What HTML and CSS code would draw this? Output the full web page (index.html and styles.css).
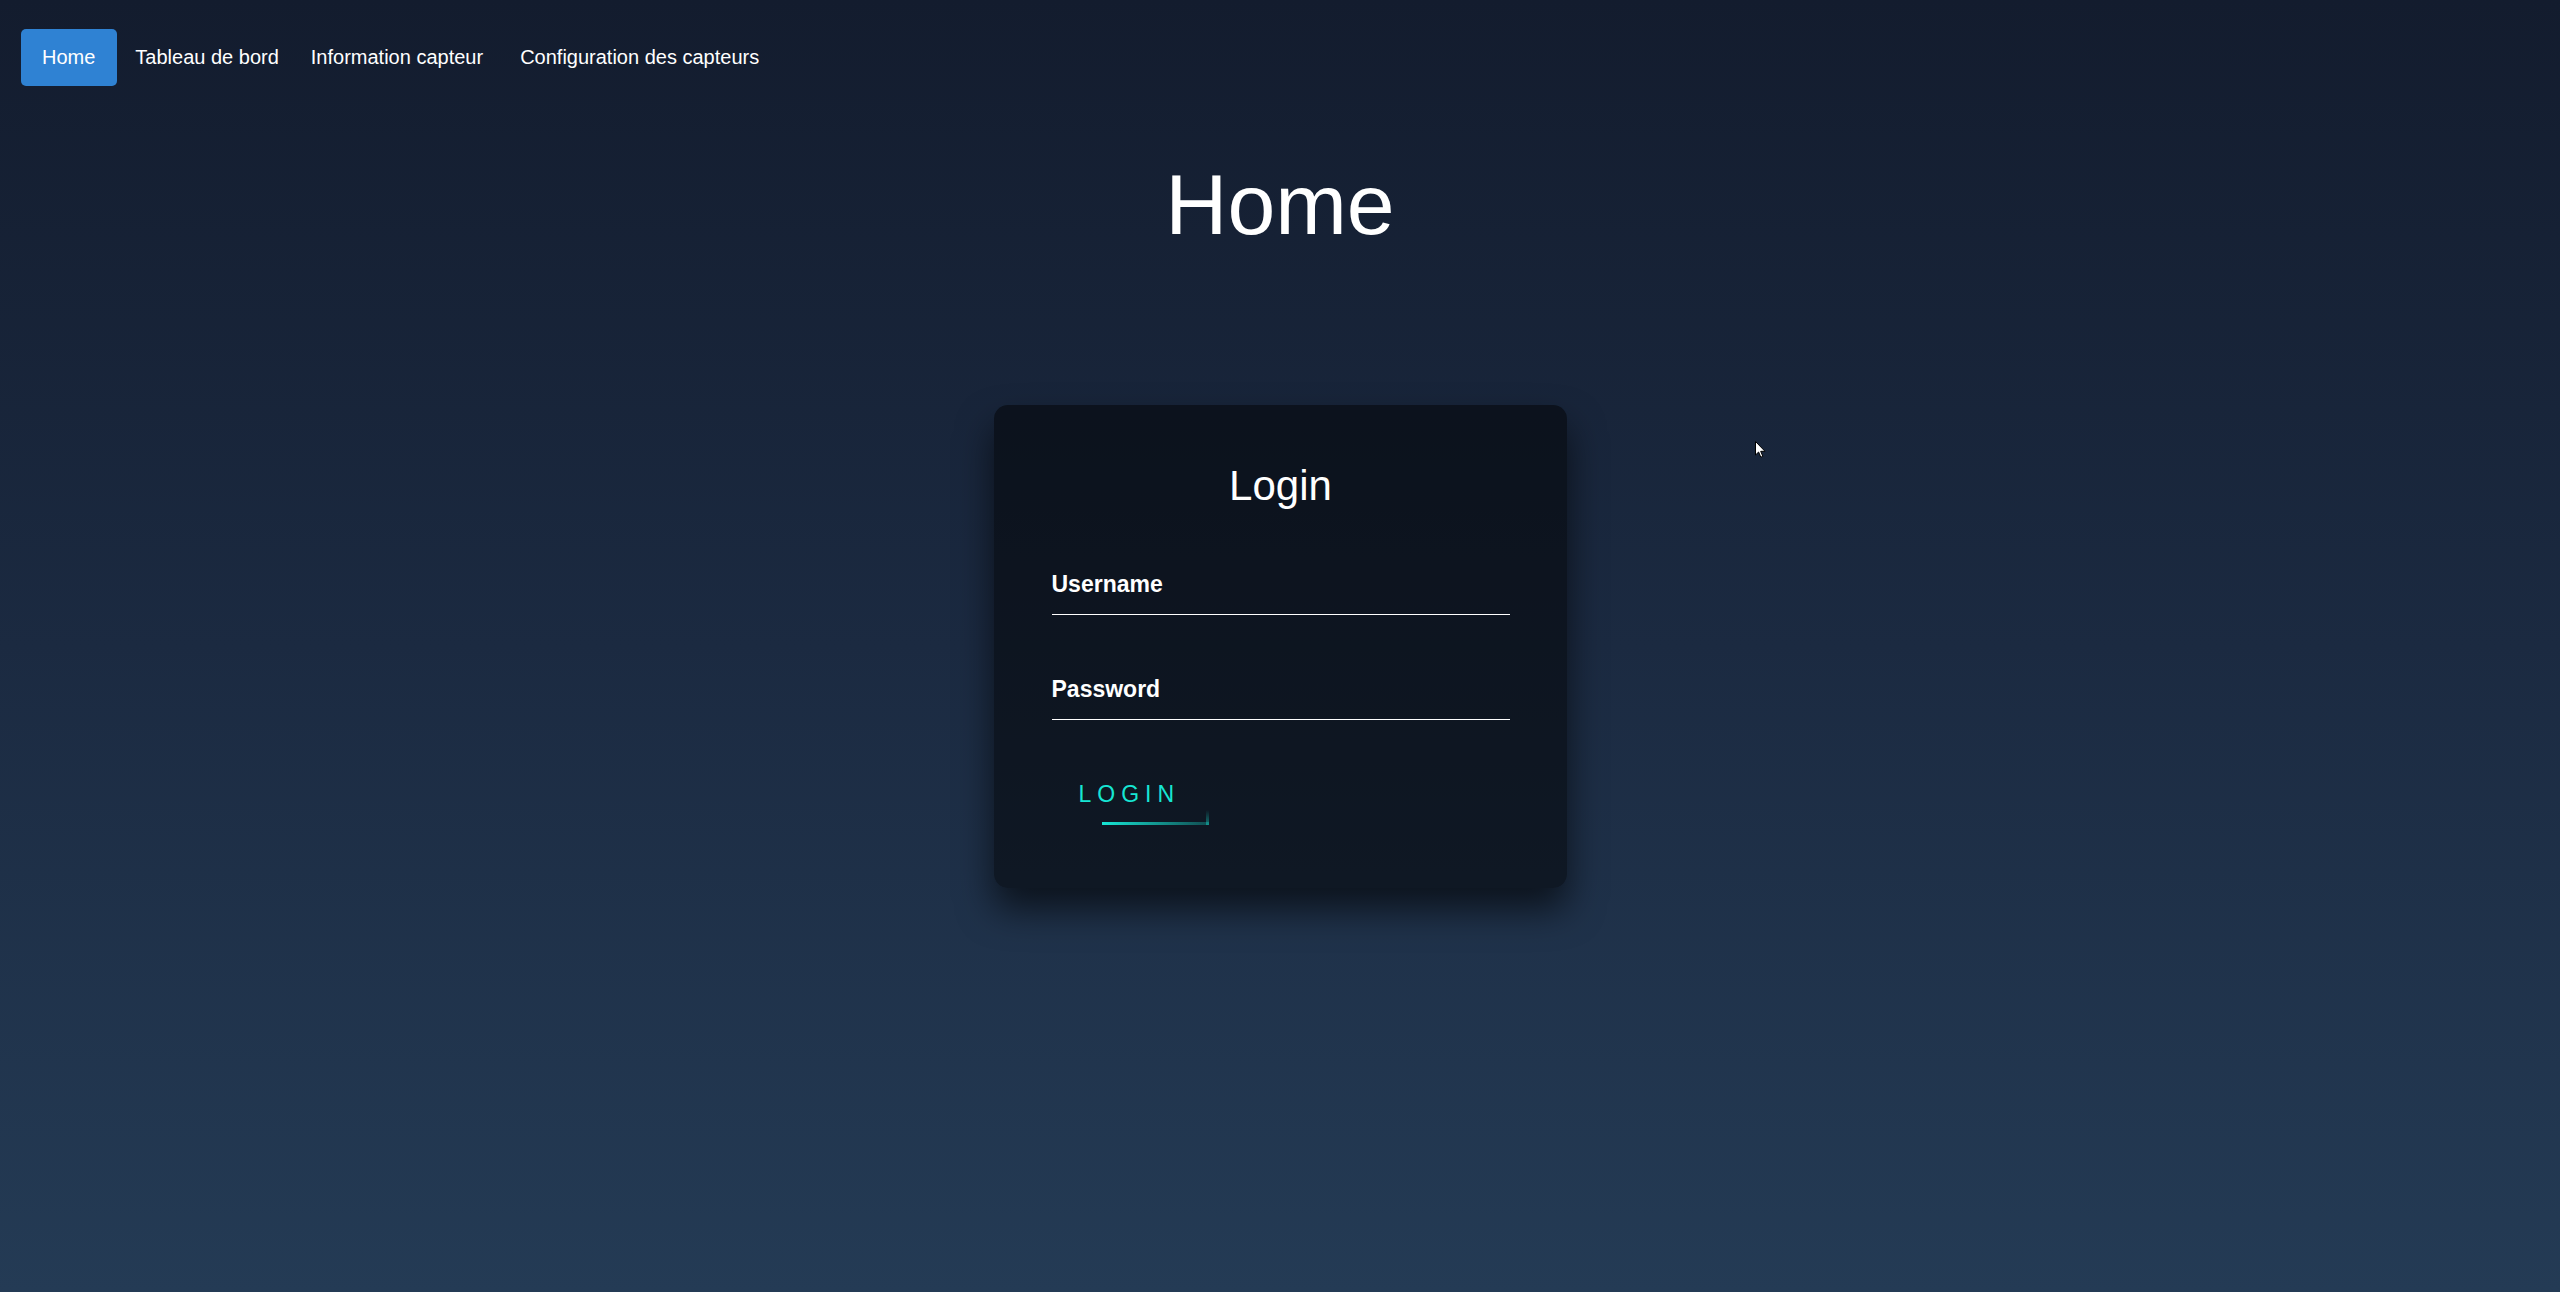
FILE: index.html
```html
<!DOCTYPE html>
<html lang="fr">
<head>
<meta charset="utf-8">
<title>Home</title>
<link rel="stylesheet" href="styles.css">
</head>
<body>
<nav class="nav">
  <a class="nav-link active" href="#">Home</a>
  <a class="nav-link link-dash" href="#">Tableau de bord</a>
  <a class="nav-link link-info" href="#">Information capteur</a>
  <a class="nav-link link-config" href="#">Configuration des capteurs</a>
</nav>
<h1 class="page-title">Home</h1>
<main class="login-box">
  <h2 class="login-title">Login</h2>
  <form class="login-form">
    <div class="user-box">
      <input type="text" name="username" required>
      <label>Username</label>
    </div>
    <div class="user-box">
      <input type="password" name="password" required>
      <label>Password</label>
    </div>
    <a class="login-btn" href="#">
      <span class="bar-bottom"></span>
      <span class="bar-right"></span>
      Login
    </a>
  </form>
</main>
<svg class="cursor" width="12" height="18" viewBox="0 0 12 18" aria-hidden="true">
  <path d="M0.5 0.5 L0.5 14 L3.6 11 L5.8 16.2 L7.8 15.3 L5.7 10.3 L10 10.3 Z" fill="#ffffff" stroke="#000000" stroke-width="1"/>
</svg>
</body>
</html>
```
FILE: styles.css
```css
html, body {
  margin: 0;
  padding: 0;
}

body {
  min-height: 1292px;
  background: linear-gradient(180deg, #131c2e 0%, #1b2a41 50%, #243b55 100%);
  font-family: "Liberation Sans", Arial, sans-serif;
  color: #ffffff;
  position: relative;
  overflow: hidden;
}

.nav {
  display: flex;
  align-items: center;
  padding: 29px 0 0 21px;
}

.nav-link {
  display: block;
  font-size: 20px;
  line-height: 23px;
  padding: 17px 0;
  color: #ffffff;
  text-decoration: none;
}

.nav-link.active {
  background: #2f82d3;
  border-radius: 5px;
  padding: 17px 22px 17px 21px;
}

.link-dash { margin-left: 18px; }
.link-info { margin-left: 32px; }
.link-config { margin-left: 37px; }

.page-title {
  margin: 68px 0 0;
  text-align: center;
  font-size: 86px;
  line-height: 100px;
  font-weight: 400;
  color: #ffffff;
}

.login-box {
  width: 573px;
  box-sizing: border-box;
  margin: 151px auto 0;
  padding: 57px 57px 59px 58px;
  background: rgba(0, 0, 0, 0.5);
  border-radius: 14px;
  box-shadow: 0 21px 36px rgba(0, 0, 0, 0.6);
}

.login-title {
  margin: 0 0 43px;
  text-align: center;
  font-size: 42px;
  line-height: 48px;
  font-weight: 400;
  color: #ffffff;
}

.login-form {
  margin: 0;
}

.user-box {
  position: relative;
  margin-bottom: 43px;
}

.user-box + .user-box {
  margin-bottom: 46px;
}

.user-box input {
  display: block;
  width: 100%;
  height: 62px;
  box-sizing: border-box;
  padding: 0;
  border: none;
  border-bottom: 1px solid #ffffff;
  background: transparent;
  outline: none;
  color: #ffffff;
  font-size: 23px;
  font-family: inherit;
}

.user-box label {
  position: absolute;
  top: 0;
  left: 0;
  padding-top: 18px;
  font-size: 23px;
  line-height: 26px;
  font-weight: 700;
  color: #ffffff;
}

.login-btn {
  position: relative;
  display: inline-block;
  padding: 14px 29px 17px 27px;
  font-size: 23px;
  line-height: 28px;
  letter-spacing: 6px;
  text-transform: uppercase;
  text-decoration: none;
  color: #16e6d4;
  overflow: hidden;
}

.bar-bottom {
  position: absolute;
  right: 0;
  bottom: 0;
  width: 107px;
  height: 3px;
  background: linear-gradient(270deg, rgba(22, 230, 212, 0.25), #16e6d4);
}

.bar-right {
  position: absolute;
  right: 0;
  bottom: 0;
  width: 3px;
  height: 15px;
  background: linear-gradient(180deg, transparent, rgba(22, 230, 212, 0.45));
}

.cursor {
  position: absolute;
  left: 1755px;
  top: 441px;
}
```
